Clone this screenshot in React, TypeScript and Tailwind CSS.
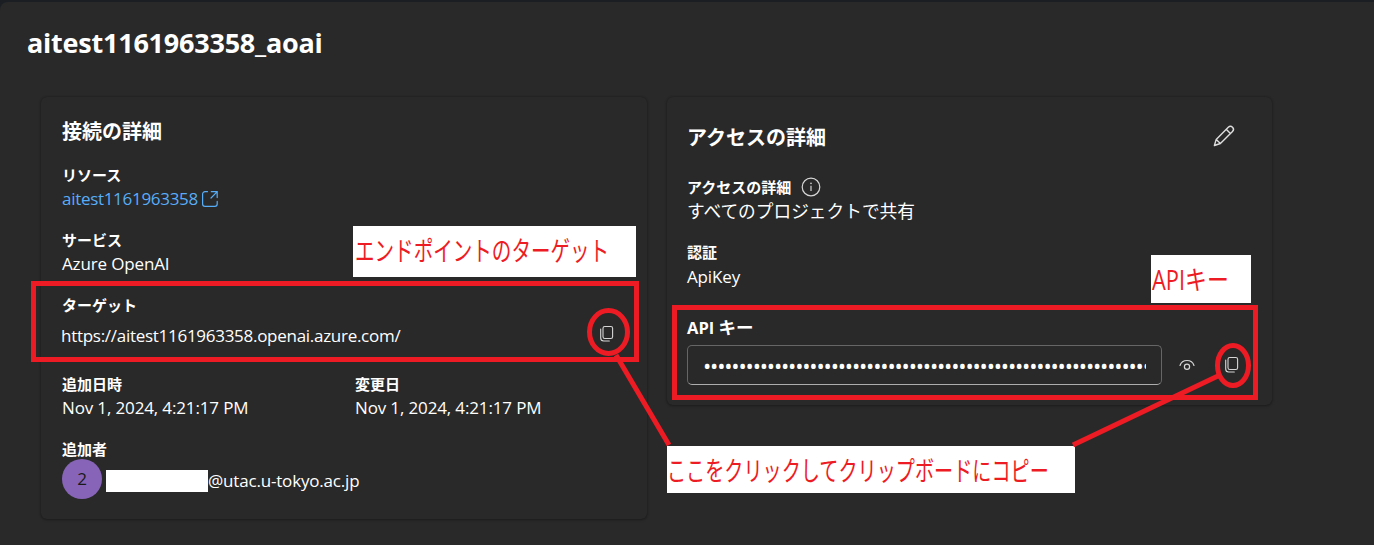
import React from "react";

const CopyIcon = () => (
  <svg width="20" height="20" viewBox="0 0 20 20" fill="none" stroke="#d6d6d6" strokeWidth="1.1">
    <rect x="6" y="2.5" width="9.6" height="12" rx="1.8" />
    <path d="M3.7 5V14a3 3 0 0 0 3 3h5.6" strokeLinecap="round" />
  </svg>
);

const Field = ({ label, children }: { label: string; children: React.ReactNode }) => (
  <div>
    <div className="h-6 text-[15px] leading-6 font-bold">{label}</div>
    <div className="flex h-6 items-center text-[17px] leading-6 tracking-[-0.14px]">{children}</div>
  </div>
);

export default function App() {
  return (
    <div className="relative h-[545px] w-[1374px] overflow-hidden bg-[#1b1f24] pt-[2px] font-['Open_Sans','Noto_Sans_CJK_JP',sans-serif] text-white whitespace-nowrap">
      <main className="h-[543px] rounded-tl-lg bg-[#292929]">
        <h1 className="ml-[27px] h-[95px] pt-[23px] text-[27px] leading-9 font-bold tracking-[-0.23px]">
          aitest1161963358_aoai
        </h1>
        <div className="ml-[41px] flex items-start gap-5">
          <section className="h-[422px] w-[606px] rounded-md pt-[21px] pl-[21px] shadow-[0_0_2px_rgba(0,0,0,0.3),0_1px_3px_rgba(0,0,0,0.25)]">
            <h2 className="mb-[17px] h-7 text-[20px] leading-7 font-bold">接続の詳細</h2>
            <div className="flex flex-col gap-[17px]">
              <Field label="リソース">
                <span className="tracking-[-0.3px] text-[#57adf8]">aitest1161963358</span>
                <svg className="ml-[3px]" width="18" height="18" viewBox="0 0 18 18" fill="none" stroke="#57adf8" strokeWidth="1.2" strokeLinecap="round">
                  <path d="M6.5 1.7H4A2.4 2.4 0 0 0 1.6 4.1v9.8A2.4 2.4 0 0 0 4 16.3h9.8a2.4 2.4 0 0 0 2.4-2.4v-2.5M10.3 1.7h5.9v5.9M16 1.9 10 8" />
                </svg>
              </Field>
              <Field label="サービス">Azure OpenAI</Field>
              <div>
                <div className="h-6 text-[15px] leading-6 font-bold">ターゲット</div>
                <div className="flex h-[38px] items-center justify-between pr-[30px] text-[17px] tracking-[-0.28px]">
                  <span className="-ml-px">https://aitest1161963358.openai.azure.com/</span>
                  <div className="pb-[4px]"><CopyIcon /></div>
                </div>
              </div>
              <div className="flex">
                <div className="w-[293px]">
                  <Field label="追加日時">Nov 1, 2024, 4:21:17 PM</Field>
                </div>
                <Field label="変更日">Nov 1, 2024, 4:21:17 PM</Field>
              </div>
              <div>
                <div className="h-[22px] text-[15px] leading-6 font-bold">追加者</div>
                <div className="flex h-10 items-center">
                  <div className="flex h-10 w-10 items-center justify-center rounded-full bg-[#8764b8] text-[17px] text-[#1a1a1a]">2</div>
                  <div className="mt-[3px] ml-1 h-[22px] w-[102px] bg-white" />
                  <span className="pt-1 text-[17px] tracking-[-0.18px]">@utac.u-tokyo.ac.jp</span>
                </div>
              </div>
            </div>
          </section>
          <section className="h-[308px] w-[605px] rounded-md pt-[26px] pl-5 shadow-[0_0_2px_rgba(0,0,0,0.3),0_1px_3px_rgba(0,0,0,0.25)]">
            <div className="mb-6 flex h-7 items-start justify-between pr-[36px]">
              <h2 className="pt-px text-[20px] leading-7 font-bold">アクセスの詳細</h2>
              <svg className="mt-px" width="24" height="24" viewBox="0 0 24 24" fill="none" stroke="#dedede" strokeWidth="1.4" strokeLinejoin="round">
                <path d="M16.3 3.2a2.9 2.9 0 0 1 4.2 4.2L8.4 19.5l-6 2 1.8-6.1ZM14.2 5.3l4.2 4.2M4.2 15.4l4.2 4.1" />
              </svg>
            </div>
            <div className="flex h-6 items-center text-[15px] font-bold">
              アクセスの詳細
              <svg className="ml-[10px]" width="20" height="20" viewBox="0 0 20 20" fill="none" stroke="#d6d6d6" strokeWidth="1.2">
                <circle cx="10" cy="10" r="8.8" />
                <path d="M10 8.8v5.2" />
                <circle cx="10" cy="6.4" r=".8" fill="#d6d6d6" stroke="none" />
              </svg>
            </div>
            <div className="mb-[17px] h-6 text-[17.7px] leading-6">すべてのプロジェクトで共有</div>
            <Field label="認証"><span className="pt-px">ApiKey</span></Field>
            <div className="mt-[27px] h-[30px] text-[16.5px] leading-[24px] font-bold">API <span className="text-[17.5px]">キー</span></div>
            <div className="flex items-center">
              <div className="flex h-10 w-[475px] items-center rounded-[5px] border border-[#666] border-b-[#adadad] px-[15px]">
                <div className="w-[443px] overflow-hidden font-['Open_Sans'] text-[22px] leading-[38px] tracking-[-1.18px]">
                  {"•".repeat(63)}
                </div>
              </div>
              <svg className="ml-[15px]" width="20" height="20" viewBox="0 0 20 20" fill="none" stroke="#d6d6d6" strokeWidth="1.2" strokeLinecap="round">
                <path d="M3 10.5c2.2-6.7 11.8-6.7 14 0" />
                <circle cx="10" cy="11.8" r="2.6" />
              </svg>
              <div className="ml-[25px]"><CopyIcon /></div>
            </div>
          </section>
        </div>
      </main>
      <div className="absolute top-[226px] left-[353px] h-[51px] w-[283px] bg-white pl-[2px] text-[27px] leading-[49px] text-[#ed1c24]">
        <span className="inline-block origin-left scale-x-[0.724]">エンドポイントのターゲット</span>
      </div>
      <div className="absolute top-[255px] left-[1151px] h-[48px] w-[100px] bg-white pl-px text-[27px] leading-[49px] text-[#ed1c24]">
        <span className="inline-block origin-left scale-x-[0.81]">APIキー</span>
      </div>
      <div className="absolute top-[446px] left-[667px] h-[47px] w-[408px] bg-white text-[27px] leading-[49px] text-[#ed1c24]">
        <span className="inline-block origin-left scale-x-[0.708]">ここをクリックしてクリップボードにコピー</span>
      </div>
      <svg className="absolute inset-0" width="1374" height="545" fill="none" stroke="#ed1c24" strokeWidth="5">
        <rect x="33.5" y="283.5" width="603" height="76" />
        <rect x="674.5" y="307.5" width="581" height="90" />
        <ellipse cx="608.5" cy="332" rx="19" ry="21.5" />
        <ellipse cx="1233" cy="365.5" rx="15.5" ry="20" />
        <path d="M616 355 669 445M1220 375 1073 445" />
      </svg>
    </div>
  );
}
